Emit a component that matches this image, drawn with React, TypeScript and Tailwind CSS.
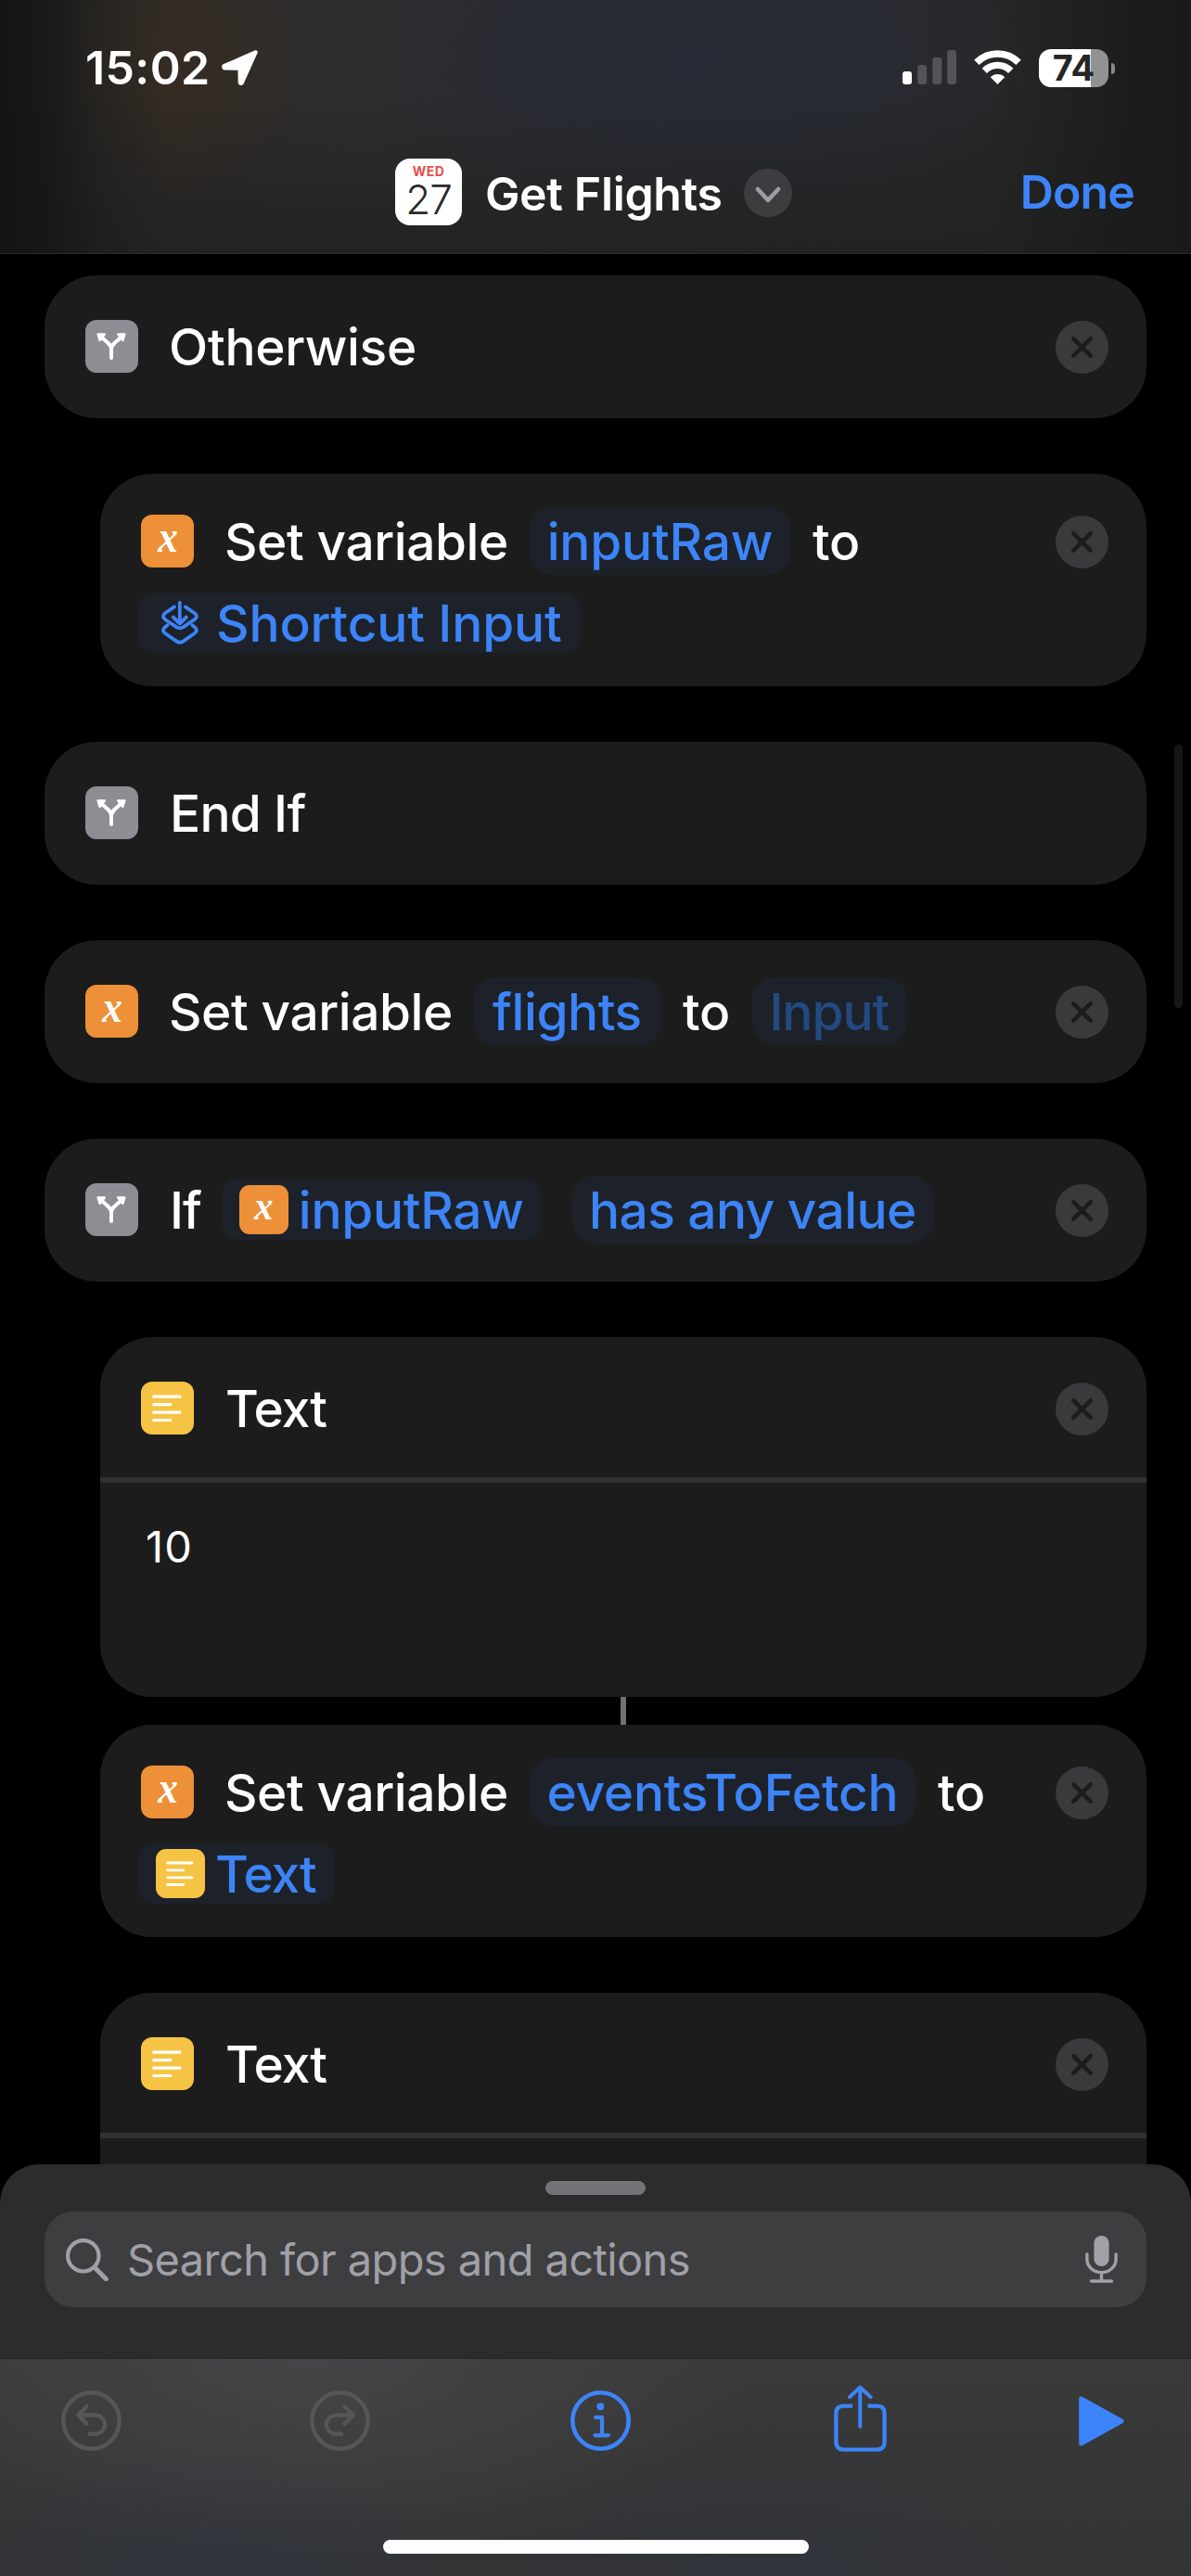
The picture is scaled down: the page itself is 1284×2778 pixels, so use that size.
import type { ReactNode } from 'react';

function BranchIcon() {
  return (
    <span className="h-[57px] w-[57px] shrink-0 overflow-hidden rounded-[12px] bg-[#8e8d93]">
      <svg viewBox="0 0 57 57" className="h-full w-full" fill="none" stroke="#fff" strokeWidth="4" strokeLinecap="round" strokeLinejoin="round">
        <path d="M28 41V31.5C28 26.5 22.5 23.3 17.8 19" />
        <path d="M28 31.5C28 26.5 33.5 23.3 38.2 19" />
        <path d="M13.6 15.400h7.200l-5.200 6.600z" fill="#fff" strokeWidth="2.400" />
        <path d="M42.400 15.400h-7.200l5.200 6.600z" fill="#fff" strokeWidth="2.400" />
      </svg>
    </span>
  );
}

function VariableIcon({ small = false }: { small?: boolean }) {
  return (
    <span
      className={
        small
          ? 'flex h-[53px] w-[53px] shrink-0 items-center justify-center rounded-[11px] bg-[#ed9038]'
          : 'flex h-[57px] w-[57px] shrink-0 items-center justify-center rounded-[12px] bg-[#ed9038]'
      }
    >
      <span
        className={
          small
            ? "-mt-[9px] scale-x-90 font-['Liberation_Serif',serif] text-[45px] leading-[46px] font-bold text-white italic"
            : "-mt-[9px] scale-x-90 font-['Liberation_Serif',serif] text-[48px] leading-[48px] font-bold text-white italic"
        }
      >
        x
      </span>
    </span>
  );
}

function TextIcon({ small = false }: { small?: boolean }) {
  return (
    <span
      className={
        small
          ? 'h-[53px] w-[53px] shrink-0 rounded-[11px] bg-[#f6c444]'
          : 'h-[57px] w-[57px] shrink-0 rounded-[12px] bg-[#f6c444]'
      }
    >
      <svg viewBox="0 0 57 57" className="h-full w-full" fill="none" stroke="#fff" strokeWidth="3.2" strokeLinecap="round">
        <path d="M13.7 16.2H41.9M13.7 24.6H31.8M13.7 33.2H41.9M13.7 41.5H31.8" />
      </svg>
    </span>
  );
}

function ShortcutInputIcon() {
  return (
    <svg viewBox="0 0 40 47" className="h-[47px] w-[40px] shrink-0" fill="none" stroke="#3c84f7" strokeWidth="3.8" strokeLinecap="round" strokeLinejoin="round">
      <path d="M19.8 2V24.4M12.8 17.6l7 7 7-7" />
      <path d="M14 6.4 4 13.2Q-.2 16.7 4 20L16.400 28.300Q19.900 30.400 23.400 28.300L35.800 20Q40 16.700 35.800 13.200L25.800 6.400" />
      <path d="M6.500 26.300 4 28.300Q-.2 31.700 4 35L16.400 43.600Q19.900 46 23.400 43.600L35.800 35Q40 31.700 35.800 28.300L33.300 26.300" />
    </svg>
  );
}

function RemoveButton() {
  return (
    <button aria-label="Remove" className="mt-px mr-[41px] ml-auto h-[57px] w-[57px] shrink-0">
      <svg viewBox="0 0 57 57" className="h-full w-full">
        <circle cx="28.5" cy="28.5" r="28.500" fill="#3a3a3c" />
        <path d="M19.300 19.300l18.400 18.400M37.700 19.300L19.300 37.700" stroke="#1c1c1c" strokeWidth="4.600" strokeLinecap="round" />
      </svg>
    </button>
  );
}

function Card({ nested = false, children }: { nested?: boolean; children: ReactNode }) {
  return (
    <section
      className={
        nested
          ? 'mr-[48px] ml-[108px] shrink-0 overflow-hidden rounded-[56px] bg-[#1c1c1c]'
          : 'mx-[48px] shrink-0 overflow-hidden rounded-[56px] bg-[#1c1c1c]'
      }
    >
      {children}
    </section>
  );
}

function Row({ icon, removable = true, children }: { icon: ReactNode; removable?: boolean; children: ReactNode }) {
  return (
    <div className="flex h-[154px] items-center pb-px pl-[44px]">
      {icon}
      <div className="ml-[33px] flex items-center">{children}</div>
      {removable && <RemoveButton />}
    </div>
  );
}

const chip = 'flex h-[73px] items-center justify-center rounded-[24px] bg-[#1d222a] text-[#3c84f7]';
const tokenChip = 'flex h-[65px] items-center rounded-[15px] bg-[#1d222a] pl-[18px] text-[#3c84f7]';

function SetVariableLabel() {
  return <span className="mr-[23px] tracking-[-0.42px]">Set variable</span>;
}

function TextCardHeader() {
  return (
    <div className="h-[157px] border-b-[6px] border-[#303036]">
      <Row icon={<TextIcon />}>
        <span className="ml-px tracking-[-1px]">Text</span>
      </Row>
    </div>
  );
}

function StatusBar() {
  return (
    <div className="flex h-[146px] items-center pr-[82px] pl-[92px]">
      <span className="text-[50px] leading-[60px] font-semibold tracking-[0.37px]">15:02</span>
      <svg viewBox="0 0 39 38" className="ml-[12px] h-[38px] w-[39px]" fill="#fff" stroke="#fff" strokeWidth="4" strokeLinejoin="round">
        <path d="M36.800 2.200 2.300 17.200Q1.700 19.100 3 19.500L19.400 19.800 19.700 35.200Q20.300 36.600 21.700 35.600z" />
      </svg>
      <svg viewBox="0 0 58 37" className="mt-[-1px] ml-auto h-[37px] w-[58px]">
        <rect x="0" y="23" width="10" height="14" rx="3" fill="#fff" />
        <rect x="16.200" y="16" width="10" height="21" rx="3" fill="#545455" />
        <rect x="32.300" y="8" width="10" height="29" rx="3" fill="#545455" />
        <rect x="48.200" y="0" width="9.800" height="37" rx="3" fill="#545455" />
      </svg>
      <svg viewBox="0 0 51 37" className="mt-[-1px] ml-[19px] h-[37px] w-[51px]" fill="none" stroke="#fff">
        <path d="M2.900 13.300A32 32 0 0 1 48.100 13.300" strokeWidth="7.600" />
        <path d="M11.300 22.300A20 20 0 0 1 39.700 22.300" strokeWidth="7.400" />
        <path d="M17.800 29.200A11 11 0 0 1 33.200 29.200L25.500 37z" fill="#fff" stroke="none" />
      </svg>
      <div className="ml-[19px] flex h-[41px] w-[75px] items-center justify-center rounded-[13px] bg-[linear-gradient(90deg,#fff_56px,#929292_56px)] text-[38px] leading-[48px] font-bold text-[#262626]">
        <span>74</span>
      </div>
      <div className="mt-px ml-[3px] h-[12px] w-[4px] rounded-r-full bg-[#8a8a8a]" />
    </div>
  );
}

function TitleBar() {
  return (
    <div className="flex h-[122px] items-center pr-[61px] pl-[426px]">
      <div className="flex h-[72px] w-[72px] flex-col items-center rounded-[16px] bg-white pt-[7px]">
        <span className="text-[14px] leading-[14px] font-bold tracking-[0.37px] text-[#e5504c]">WED</span>
        <span className="mt-px text-[44px] leading-[44px] font-light tracking-[-1px] text-[#2b2b2b]">27</span>
      </div>
      <h1 className="mt-[4px] ml-[25px] text-[50px] leading-[60px] font-semibold tracking-[-0.35px]">Get Flights</h1>
      <svg viewBox="0 0 52 52" className="mt-[2px] ml-[23px] h-[52px] w-[52px]" fill="none">
        <circle cx="26" cy="26" r="26" fill="#3d3d40" />
        <path d="M14.900 22 26 33.800 37.100 22" stroke="#9d9da5" strokeWidth="4.600" strokeLinecap="round" strokeLinejoin="round" />
      </svg>
      <button className="ml-auto text-[50px] leading-[60px] font-semibold tracking-[-0.88px] text-[#3c84f7]">Done</button>
    </div>
  );
}

function Toolbar() {
  return (
    <div className="flex h-[133px] items-center pl-[66px]">
      <svg viewBox="0 0 65 65" className="h-[65px] w-[65px]" fill="none" stroke="#565657" strokeWidth="4.400" strokeLinecap="round" strokeLinejoin="round">
        <circle cx="32.500" cy="32.500" r="30.200" />
        <path d="M27.500 17 18.300 26.500 27.500 36M18.500 26.500H37a10.100 10.100 0 0 1 0 20.200H31" />
      </svg>
      <svg viewBox="0 0 65 65" className="ml-[203px] h-[65px] w-[65px]" fill="none" stroke="#565657" strokeWidth="4.400" strokeLinecap="round" strokeLinejoin="round">
        <circle cx="32.500" cy="32.500" r="30.200" />
        <path d="M37.500 17 46.700 26.500 37.500 36M46.500 26.500H28a10.100 10.100 0 0 0 0 20.200H34" />
      </svg>
      <svg viewBox="0 0 65 65" className="ml-[216px] h-[65px] w-[65px]" fill="none" stroke="#3c84f7" strokeWidth="4.600" strokeLinecap="round" strokeLinejoin="round">
        <circle cx="32.500" cy="32.500" r="30.200" />
        <path d="M27 28.800H34V48.300M26.500 48.300H40.800" strokeWidth="4.200" />
        <circle cx="32.300" cy="17.300" r="4" fill="#3c84f7" stroke="none" />
      </svg>
      <svg viewBox="0 0 57 72" className="mt-[-5px] ml-[219px] h-[72px] w-[57px]" fill="none" stroke="#3c84f7" strokeWidth="4.400">
        <path d="M20.200 22.600H10.500Q2.400 22.600 2.400 30.500V61.500Q2.400 69.600 10.500 69.600H46.500Q54.600 69.600 54.600 61.500V30.500Q54.600 22.600 46.500 22.600H36.500" />
        <path d="M28.300 2.800V44.800M17 13 28.300 2.500 39.600 13" strokeWidth="4" strokeLinecap="round" strokeLinejoin="round" />
      </svg>
      <svg viewBox="0 0 49 54" className="ml-[207px] h-[54px] w-[49px]" fill="#3c84f7" stroke="#3c84f7" strokeWidth="5" strokeLinejoin="round">
        <path d="M2.700 2.900V51.100L46 27z" />
      </svg>
    </div>
  );
}

export default function App() {
  return (
    <div className="flex h-[2778px] w-[1284px] flex-col overflow-hidden bg-black font-['Inter',sans-serif] text-white">
      <header className="h-[274px] shrink-0 border-b border-[#2a2a2a] bg-[linear-gradient(90deg,#141413_0px,rgba(20,20,19,0.8)_50px,rgba(20,20,19,0.3)_110px,rgba(20,20,19,0)_180px),linear-gradient(270deg,#191919_0px,rgba(25,25,25,0)_220px),linear-gradient(180deg,rgba(32,33,33,0)_100px,rgba(32,33,33,0.85)_274px),radial-gradient(ellipse_160px_240px_at_190px_80px,rgba(54,43,34,0.95),rgba(54,43,34,0.4)_55%,rgba(54,43,34,0)),radial-gradient(ellipse_380px_210px_at_745px_65px,#272b35,rgba(39,43,53,0.7)_50%,rgba(39,43,53,0)),linear-gradient(90deg,#2b2c28,#2d2d2d_400px,#282a2b_900px,#242424)]">
        <StatusBar />
        <TitleBar />
      </header>

      <main className="relative flex h-[2060px] shrink-0 flex-col overflow-hidden pt-[23px] text-[55px] leading-[66px] font-medium whitespace-nowrap">
        <div className="flex flex-col gap-[60px]">
          <Card>
            <Row icon={<BranchIcon />}>
              <span className="tracking-[-0.27px]">Otherwise</span>
            </Row>
          </Card>

          <Card nested>
            <div className="h-[229px] pt-[36px]">
              <div className="flex h-[73px] items-center pl-[44px]">
                <VariableIcon />
                <div className="ml-[33px] flex items-center">
                  <SetVariableLabel />
                  <span className={`${chip} w-[281px] tracking-[-0.2px]`}>inputRaw</span>
                  <span className="ml-[24px]">to</span>
                </div>
                <RemoveButton />
              </div>
              <div className={`${tokenChip} mt-[19px] ml-[42px] w-[475px]`}>
                <span className="ml-[6px] flex">
                  <ShortcutInputIcon />
                </span>
                <span className="mt-px ml-[19px] tracking-[-0.12px]">Shortcut Input</span>
              </div>
            </div>
          </Card>

          <Card>
            <Row icon={<BranchIcon />} removable={false}>
              <span className="ml-px tracking-[-0.7px]">End If</span>
            </Row>
          </Card>

          <Card>
            <Row icon={<VariableIcon />}>
              <SetVariableLabel />
              <span className={`${chip} w-[201px] tracking-[-0.4px]`}>flights</span>
              <span className="mx-[24px]">to</span>
              <span className={`${chip} w-[167px] pr-[2px] tracking-[-1px]`}>
                <span className="text-[#234a80]">Input</span>
              </span>
            </Row>
          </Card>

          <Card>
            <Row icon={<BranchIcon />}>
              <span className="ml-px tracking-[-1px]">If</span>
              <span className={`${tokenChip} ml-[23px] w-[343px]`}>
                <VariableIcon small />
                <span className="ml-[11px] tracking-[-0.3px]">inputRaw</span>
              </span>
              <span className={`${chip} ml-[34px] w-[389px] tracking-[-0.57px]`}>has any value</span>
            </Row>
          </Card>

          <div>
            <Card nested>
              <div className="h-[388px]">
                <TextCardHeader />
                <p className="mt-[37px] ml-[49px] text-[47px] leading-[64px] font-normal tracking-[1.2px]">10</p>
              </div>
            </Card>
            <div className="ml-[669px] h-[30px] w-[6px] bg-[#717178]" />
            <Card nested>
              <div className="h-[229px] pt-[36px]">
                <div className="flex h-[73px] items-center pl-[44px]">
                  <VariableIcon />
                  <div className="ml-[33px] flex items-center">
                    <SetVariableLabel />
                    <span className={`${chip} w-[416px] tracking-[-0.21px]`}>eventsToFetch</span>
                    <span className="ml-[24px]">to</span>
                  </div>
                  <RemoveButton />
                </div>
                <div className={`${tokenChip} mt-[19px] ml-[42px] w-[210px]`}>
                  <TextIcon small />
                  <span className="mt-px ml-[11px] tracking-[-1.1px]">Text</span>
                </div>
              </div>
            </Card>
          </div>

          <Card nested>
            <div className="h-[388px]">
              <TextCardHeader />
            </div>
          </Card>
        </div>
        <div className="absolute top-[529px] right-[9px] h-[284px] w-[9px] rounded-full bg-[#161616]" />
      </main>

      <section className="h-[210px] shrink-0 rounded-t-[42px] border-b border-[#262626] bg-[#2c2c2c] pt-[18px]">
        <div className="mx-auto h-[15px] w-[108px] rounded-full bg-[#727277]" />
        <div className="mx-[48px] mt-[18px] flex h-[103px] items-center rounded-[31px] bg-[#3e3e40] pr-[31px] pl-[23px]">
          <svg viewBox="0 0 46 46" className="h-[46px] w-[46px]" fill="none" stroke="#a0a0a8" strokeLinecap="round">
            <circle cx="18.800" cy="18.800" r="16.700" strokeWidth="4.200" />
            <path d="M31.300 31.500 43.300 43.700" strokeWidth="5" />
          </svg>
          <span className="ml-[20px] text-[47px] leading-[60px] tracking-[-0.6px] text-[#a0a0a8]">Search for apps and actions</span>
          <svg viewBox="0 0 35 51" className="ml-auto h-[51px] w-[35px]" fill="none" stroke="#a0a0a8" strokeWidth="3.400" strokeLinecap="round">
            <rect x="9.400" y="0" width="16.200" height="33" rx="8.100" fill="#a0a0a8" stroke="none" />
            <path d="M1.900 20v5.500a15.600 14.200 0 0 0 31.200 0V20M17.500 40V48.500M6.500 49H28.500" />
          </svg>
        </div>
      </section>

      <footer className="flex h-[234px] shrink-0 flex-col bg-[radial-gradient(ellipse_480px_220px_at_330px_0px,#454547,rgba(69,69,71,0.5)_50%,rgba(69,69,71,0)),radial-gradient(ellipse_280px_150px_at_230px_234px,#2f343c,rgba(47,52,60,0.5)_50%,rgba(47,52,60,0)),radial-gradient(ellipse_320px_130px_at_830px_234px,#30343b,rgba(48,52,59,0.5)_50%,rgba(48,52,59,0)),linear-gradient(180deg,#3a3a3b,#323334)]">
        <Toolbar />
        <div className="mt-[62px] ml-[413px] h-[15px] w-[459px] rounded-full bg-[#fdfdfd]" />
      </footer>
    </div>
  );
}
